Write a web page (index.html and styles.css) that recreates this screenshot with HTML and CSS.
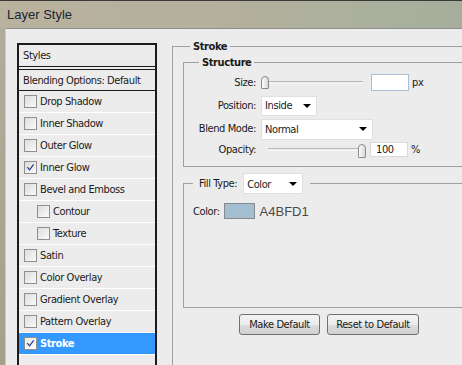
FILE: index.html
```html
<!DOCTYPE html>
<html lang="en">
<head>
  <meta charset="UTF-8" />
  <title>Layer Style</title>
  <link rel="stylesheet" href="styles.css">
</head>
<body>

  <div class="titlebar">Layer Style</div>

  <div class="window">
    <!-- effects list -->
    <div class="styles-panel">
      <div class="panel-head">Styles</div>
      <div class="panel-blend">Blending Options: Default</div>
      <ul class="effect-list">
        <li><span class="check"></span>Drop Shadow</li>
        <li><span class="check"></span>Inner Shadow</li>
        <li><span class="check"></span>Outer Glow</li>
        <li><span class="check"><svg viewBox="0 0 12 12"><path d="M2.5 5.5 L5 8.5 L9.5 2.5"/></svg></span>Inner Glow</li>
        <li><span class="check"></span>Bevel and Emboss</li>
        <li class="sub"><span class="check"></span>Contour</li>
        <li class="sub"><span class="check"></span>Texture</li>
        <li><span class="check"></span>Satin</li>
        <li><span class="check"></span>Color Overlay</li>
        <li><span class="check"></span>Gradient Overlay</li>
        <li><span class="check"></span>Pattern Overlay</li>
        <li class="selected"><span class="check"><svg viewBox="0 0 12 12"><path d="M2.5 5.5 L5 8.5 L9.5 2.5"/></svg></span>Stroke</li>
      </ul>
    </div>

    <!-- stroke options -->
    <div class="options">
      <fieldset class="group stroke-group">
        <legend>Stroke</legend>

        <fieldset class="group structure">
          <legend>Structure</legend>
          <div class="form-grid">
            <label>Size:</label>
            <div class="control">
              <div class="slider"><span class="thumb"></span></div>
              <span class="num size-box"></span>
              <span class="unit">px</span>
            </div>

            <label>Position:</label>
            <div class="control">
              <div class="select select-pos">Inside<span class="arrow"></span></div>
            </div>

            <label>Blend Mode:</label>
            <div class="control">
              <div class="select select-blend">Normal<span class="arrow"></span></div>
            </div>

            <label>Opacity:</label>
            <div class="control">
              <div class="slider slider-end"><span class="thumb"></span></div>
              <span class="num opacity-box">100</span>
              <span class="unit">%</span>
            </div>
          </div>
        </fieldset>

        <fieldset class="group fill">
          <legend><span>Fill Type:</span><div class="select select-fill">Color<span class="arrow"></span></div></legend>
          <div class="color-row">
            <span>Color:</span>
            <span class="swatch"></span>
            <span class="hex">A4BFD1</span>
          </div>
        </fieldset>

        <div class="buttons">
          <button class="btn btn-make">Make Default</button>
          <button class="btn btn-reset">Reset to Default</button>
        </div>
      </fieldset>
    </div>
  </div>

</body>
</html>
```

FILE: styles.css
```css
html, body {
  margin: 0;
  height: 365px;
  overflow: hidden;
}
body {
  font-family: "DejaVu Sans Condensed", "Liberation Sans", Arial, sans-serif;
  font-size: 11px;
  letter-spacing: -0.4px;
  color: #1a1a1a;
  background: linear-gradient(to bottom, #b3ad9b, #a59f8c);
}
.titlebar {
  height: 27px;
  border-top: 1px solid #3a3a36;
  padding-left: 7px;
  line-height: 28px;
  font-family: "Liberation Sans", Arial, sans-serif;
  font-size: 13px;
  letter-spacing: 0;
  color: #1b2433;
  background: linear-gradient(to right, #b9b29f 0%, #b3b09d 50%, #a9b09d 85%, #a7ad9b 100%);
}
.window {
  display: flex;
  margin-left: 5px;
  height: 336px;
  overflow: hidden;
  border-top: 1px solid #8e8e8e;
  border-left: 1px solid #c8c8c8;
  background-color: #ececec;
}

/* left list */
.styles-panel {
  flex: none;
  width: 136px;
  margin: 14px 0 0 11px;
  border: 2px solid #1c1c1c;
  border-bottom: none;
  white-space: nowrap;
}
.panel-head {
  height: 21px;
  line-height: 22px;
  padding-left: 4px;
  border-bottom: 1px solid #1c1c1c;
}
.panel-blend {
  height: 20px;
  line-height: 21px;
  padding-left: 4px;
  margin-top: 2px;
  border-top: 1px solid #1c1c1c;
  border-bottom: 1px solid #1c1c1c;
}
.effect-list {
  list-style: none;
  margin: 0;
  padding: 0;
}
.effect-list li {
  display: flex;
  align-items: center;
  height: 21px;
  padding-left: 5px;
  border-bottom: 1px solid #ffffff;
}
.effect-list li.sub {
  padding-left: 18px;
}
.effect-list li.selected {
  background-color: #3399ff;
  color: #fff;
  font-weight: bold;
}
.check {
  display: inline-block;
  flex: none;
  width: 11px;
  height: 11px;
  margin-right: 3px;
  border: 1px solid #8e8f8f;
  background: linear-gradient(135deg, #dcdcdc, #fbfbfb);
}
.check svg {
  display: block;
  width: 11px;
  height: 11px;
}
.check path {
  fill: none;
  stroke: #2a3a8c;
  stroke-width: 1.4;
}
.selected .check {
  background: linear-gradient(135deg, #e8e8e8, #ffffff);
}

/* right side */
.options {
  flex: none;
  margin-left: 15px;
  white-space: nowrap;
}
.group {
  margin: 0;
  border: 1px solid #a0a0a0;
  border-right: none;
}
.group legend {
  padding: 0 3px;
  line-height: 13px;
  font-weight: bold;
}
.stroke-group {
  margin-top: 11px;
  width: 320px;
  height: 340px;
  padding: 3px 0 0 10px;
}
.stroke-group > legend {
  margin-left: 7px;
}
.structure {
  padding: 2px 0 7px 0;
}
.structure > legend {
  margin-left: 15px;
}
.form-grid {
  display: grid;
  grid-template-columns: 72px auto;
  grid-template-rows: 22px 24px 23px 19px;
  column-gap: 5px;
  align-items: center;
}
.form-grid label {
  text-align: right;
}
.control {
  display: flex;
  align-items: center;
}
.slider {
  position: relative;
  width: 102px;
  height: 13px;
}
.slider::before {
  content: "";
  position: absolute;
  left: 3px;
  right: 0;
  top: 5px;
  height: 1px;
  border-top: 1px solid #b8b8b8;
  border-bottom: 1px solid #f6f6f6;
}
.slider-end {
  margin-left: 4px;
  width: 101px;
}
.thumb {
  position: absolute;
  left: 0;
  top: 0;
  width: 6px;
  height: 11px;
  border: 1px solid #8a8a8a;
  border-radius: 4px 4px 1px 1px;
  background: linear-gradient(to right, #fdfdfd, #d8d8d8);
}
.slider-end .thumb {
  left: auto;
  right: 0;
  top: 1px;
  height: 12px;
}
.num {
  display: inline-block;
  box-sizing: border-box;
  width: 38px;
  background-color: #fff;
  border: 1px solid #c2cdd8;
  padding-left: 5px;
}
.size-box {
  height: 17px;
  margin-left: 8px;
  border-color: #a9bfd6;
}
.opacity-box {
  height: 15px;
  line-height: 14px;
  margin-left: 4px;
  border-color: #dadada;
}
.unit {
  margin-left: 3px;
}
.select {
  display: flex;
  align-items: center;
  justify-content: space-between;
  box-sizing: border-box;
  padding: 0 5px 1px 3px;
  background-color: #fff;
  border: 1px solid #e0e0e0;
  font-weight: normal;
}
.select-pos {
  width: 56px;
  height: 20px;
  margin-top: 2px;
}
.select-blend {
  width: 112px;
  height: 21px;
  margin-top: 2px;
}
.arrow {
  width: 0;
  height: 0;
  border-left: 4px solid transparent;
  border-right: 4px solid transparent;
  border-top: 4px solid #000;
}
.fill {
  margin-top: 6px;
  height: 124px;
  padding: 9px 0 0 9px;
}
.fill > legend {
  display: flex;
  align-items: center;
  margin-left: 0;
  padding: 0 7px 0 6px;
  line-height: 21px;
  font-weight: normal;
}
.select-fill {
  width: 60px;
  height: 21px;
  margin-left: 6px;
  padding-top: 2px;
}
.color-row {
  display: flex;
  align-items: center;
}
.swatch {
  display: inline-block;
  width: 29px;
  height: 14px;
  margin-left: 4px;
  background-color: #a4bfd1;
  border: 1px solid #8a8a8a;
}
.hex {
  margin-left: 5px;
  font-family: "Liberation Sans", Arial, sans-serif;
  font-size: 13px;
  letter-spacing: 0;
  color: #4a4a4a;
}
.buttons {
  display: flex;
  gap: 7px;
  margin: 6px 0 0 56px;
}
.btn {
  height: 21px;
  padding: 0;
  font-family: inherit;
  font-size: 11px;
  letter-spacing: -0.4px;
  color: #1a1a1a;
  border: 1px solid #707070;
  border-radius: 3px;
  background: linear-gradient(to bottom, #f3f3f3 0%, #ebebeb 50%, #dddddd 51%, #cfcfcf 100%);
}
.btn-make {
  width: 81px;
}
.btn-reset {
  width: 92px;
}
```
